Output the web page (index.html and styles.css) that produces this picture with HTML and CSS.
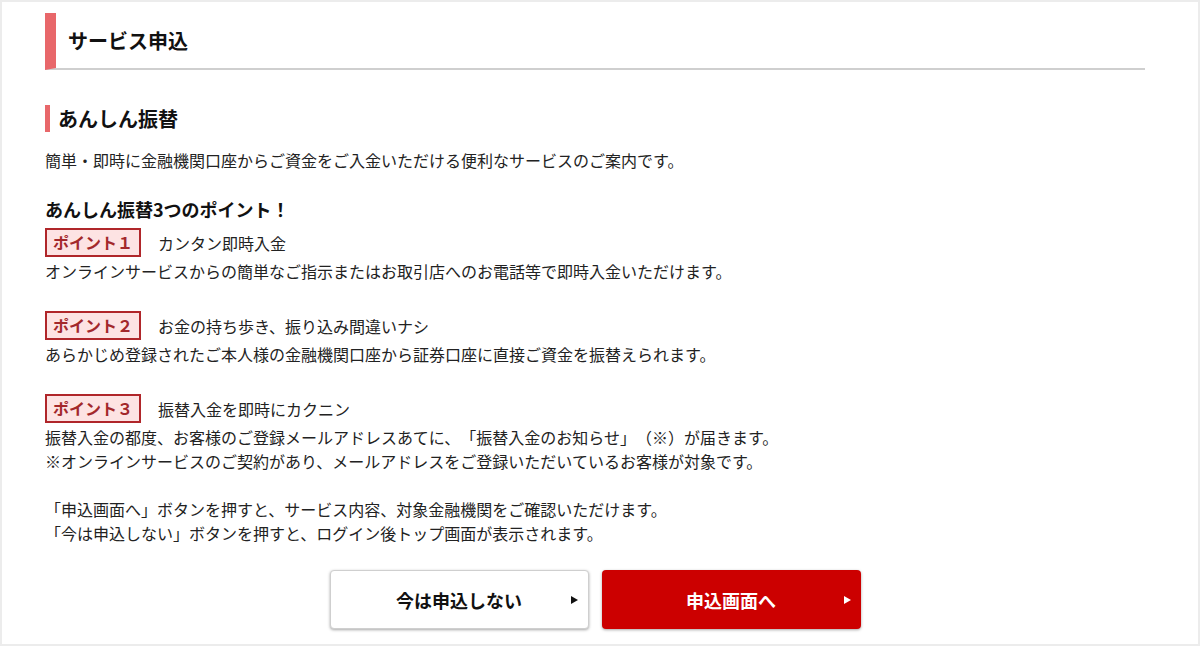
FILE: index.html
```html
<!DOCTYPE html>
<html lang="ja">
<head>
<meta charset="utf-8">
<title>サービス申込</title>
<link rel="stylesheet" href="styles.css">
</head>
<body>
<div class="panel">
  <h1 class="page-title">サービス申込</h1>
  <h2 class="sub-title">あんしん振替</h2>
  <p class="lead">簡単・即時に金融機関口座からご資金をご入金いただける便利なサービスのご案内です。</p>
  <h3 class="points-title">あんしん振替3つのポイント！</h3>

  <div class="point">
    <div class="point-head"><span class="badge">ポイント１</span><span class="point-name">カンタン即時入金</span></div>
    <p class="point-desc">オンラインサービスからの簡単なご指示またはお取引店へのお電話等で即時入金いただけます。</p>
  </div>

  <div class="point">
    <div class="point-head"><span class="badge">ポイント２</span><span class="point-name">お金の持ち歩き、振り込み間違いナシ</span></div>
    <p class="point-desc">あらかじめ登録されたご本人様の金融機関口座から証券口座に直接ご資金を振替えられます。</p>
  </div>

  <div class="point">
    <div class="point-head"><span class="badge">ポイント３</span><span class="point-name">振替入金を即時にカクニン</span></div>
    <p class="point-desc">振替入金の都度、お客様のご登録メールアドレスあてに、「振替入金のお知らせ」（※）が届きます。<br>※オンラインサービスのご契約があり、メールアドレスをご登録いただいているお客様が対象です。</p>
  </div>

  <p class="note">「申込画面へ」ボタンを押すと、サービス内容、対象金融機関をご確認いただけます。<br>「今は申込しない」ボタンを押すと、ログイン後トップ画面が表示されます。</p>

  <div class="actions">
    <a class="btn btn-secondary" href="#">今は申込しない</a>
    <a class="btn btn-primary" href="#">申込画面へ</a>
  </div>
</div>
</body>
</html>
```

FILE: styles.css
```css
html, body {
  margin: 0;
  padding: 0;
  background: #ececec;
}
body {
  font-family: "Noto Sans CJK JP", "Noto Sans", sans-serif;
  color: #222;
  font-size: 16px;
  line-height: 24px;
  text-spacing-trim: space-all;
}
.panel {
  margin: 2px;
  height: 642px;
  box-sizing: border-box;
  background: #fff;
  padding: 11px 53px 0 43px;
}
.page-title {
  margin: 0;
  height: 55px;
  line-height: 55px;
  border-left: 11px solid #e8676a;
  border-bottom: 2px solid #cfcfcf;
  padding-left: 12px;
  font-size: 20px;
  font-weight: bold;
  color: #111;
}
.sub-title {
  margin: 35px 0 0;
  height: 27px;
  line-height: 27px;
  border-left: 5px solid #e8676a;
  padding-left: 8px;
  font-size: 20px;
  font-weight: bold;
  color: #111;
}
.lead {
  margin: 16px 0 0;
  font-size: 16px;
}
.points-title {
  margin: 25px 0 0;
  font-size: 18px;
  font-weight: bold;
  line-height: 24px;
  color: #111;
}
.point {
  margin-top: 7px;
}
.point + .point {
  margin-top: 28px;
}
.point-head {
  display: flex;
  align-items: center;
}
.badge {
  display: inline-block;
  border: 2px solid #b0262a;
  background: #fde3e3;
  color: #a3282b;
  font-weight: bold;
  font-size: 16px;
  line-height: 25px;
  padding: 0 6px;
}
.point-name {
  margin-left: 17px;
  font-size: 16px;
}
.point-desc {
  margin: 2px 0 0;
  font-size: 16px;
}
.note {
  margin: 24px 0 0;
  font-size: 16px;
}
.actions {
  margin-top: 25px;
  display: flex;
  justify-content: center;
  gap: 13px;
}
.btn {
  position: relative;
  display: flex;
  align-items: center;
  justify-content: center;
  width: 259px;
  height: 59px;
  box-sizing: border-box;
  border-radius: 4px;
  font-size: 18px;
  font-weight: bold;
  text-decoration: none;
  box-shadow: 0 1px 3px rgba(0, 0, 0, 0.35);
}
.btn::after {
  content: "";
  position: absolute;
  right: 10px;
  top: 50%;
  margin-top: -4px;
  border-style: solid;
  border-width: 4px 0 4px 7px;
  border-color: transparent;
}
.btn-secondary {
  background: #fff;
  color: #111;
  border: 1px solid #cfcfcf;
}
.btn-secondary::after {
  border-left-color: #111;
}
.btn-primary {
  background: #cc0000;
  color: #fff;
}
.btn-primary::after {
  border-left-color: #fff;
}
```
